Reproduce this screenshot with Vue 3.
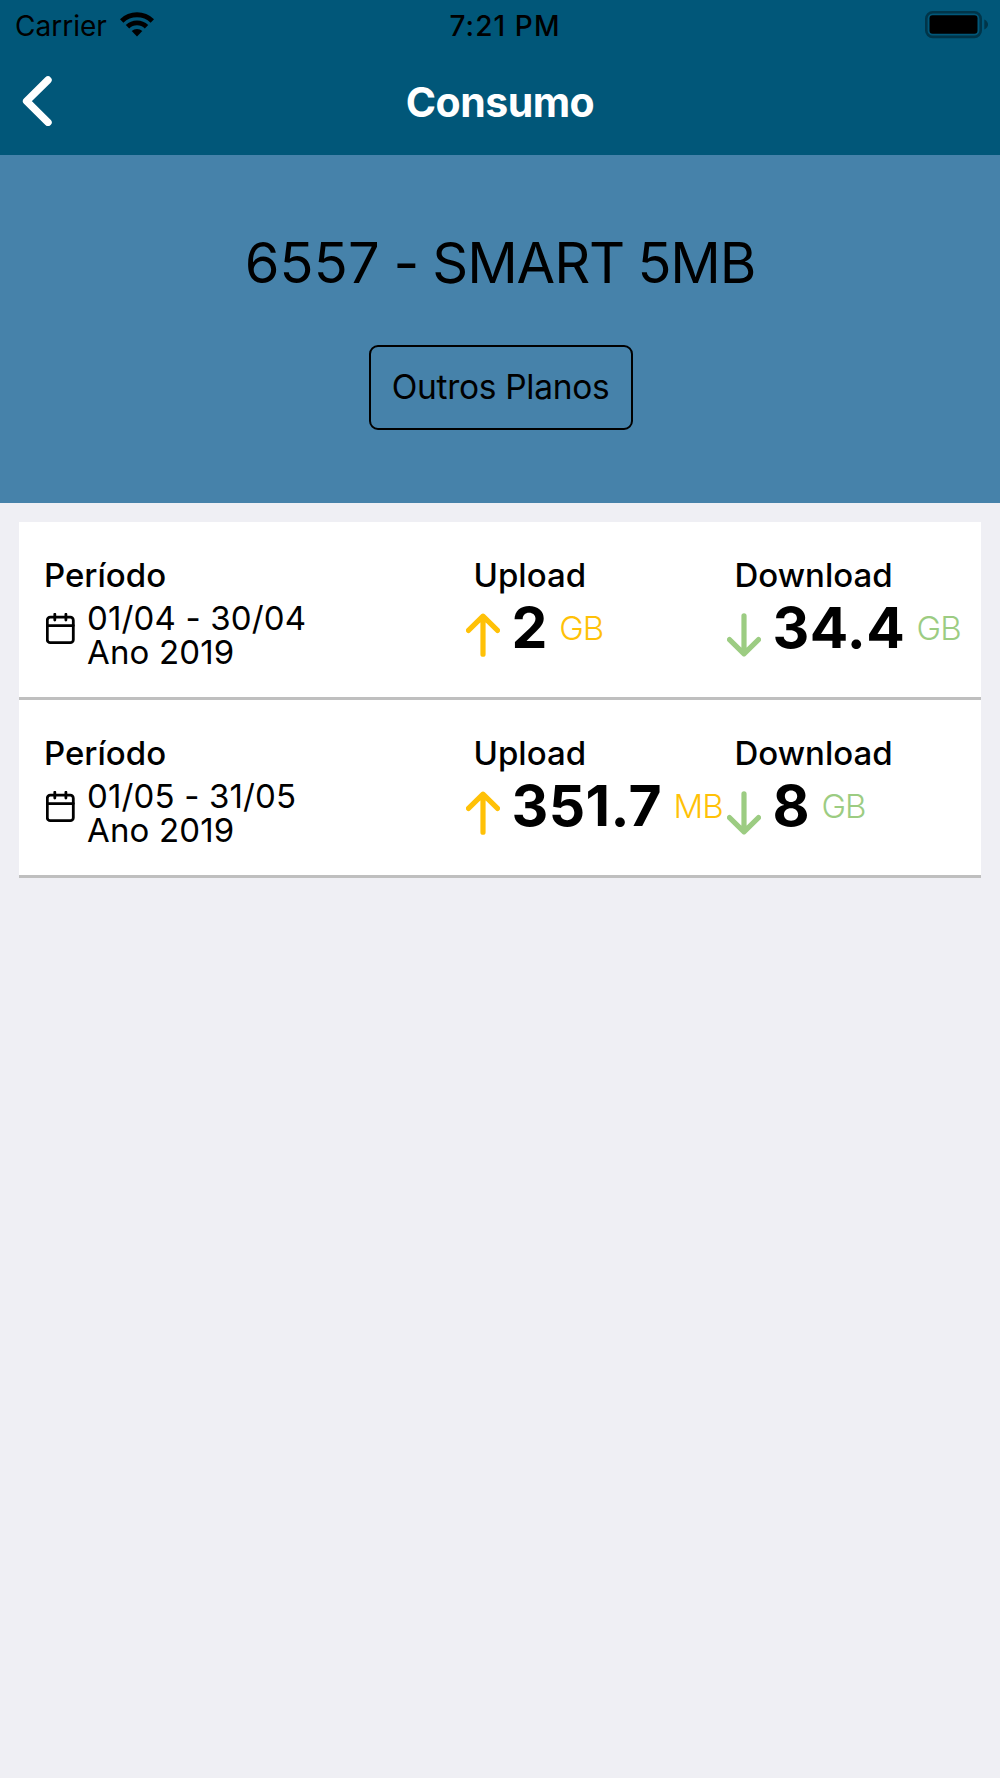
<script setup>
const plan = { code: 6557, name: 'SMART 5MB' }

const periods = [
  {
    range: '01/04 - 30/04',
    year: 2019,
    upload: { value: '2', unit: 'GB' },
    download: { value: '34.4', unit: 'GB' },
  },
  {
    range: '01/05 - 31/05',
    year: 2019,
    upload: { value: '351.7', unit: 'MB' },
    download: { value: '8', unit: 'GB' },
  },
]
</script>

<template>
  <div class="screen">
    <header class="header">
      <div class="status-bar">
        <div class="status-left">
          <span class="carrier">Carrier</span>
          <svg class="wifi" viewBox="0 0 34 25">
            <path d="M0 7.2 A24.4 24.4 0 0 1 34 7.2 L30.6 10.7 A19.5 19.5 0 0 0 3.4 10.7 Z" />
            <path d="M5.8 13 A16 16 0 0 1 28.2 13 L24.8 16.4 A11.2 11.2 0 0 0 9.2 16.4 Z" />
            <path d="M11.7 19 A7.8 7.8 0 0 1 22.3 19 L17 24.5 Z" />
          </svg>
        </div>
        <span class="clock">7:21 PM</span>
        <div class="status-right">
          <svg class="battery" viewBox="0 0 64 28">
            <rect x="1.3" y="1.3" width="54.4" height="24.6" rx="6.5" class="battery-shell" />
            <rect x="4.5" y="4.2" width="48" height="18.6" rx="3" />
            <path d="M59.3 8.5 Q63 10.5 63 13.5 Q63 16.5 59.3 18.5 Z" class="battery-cap" />
          </svg>
        </div>
      </div>
      <nav class="nav-bar">
        <button class="back" aria-label="Voltar">
          <svg viewBox="0 0 30 50">
            <path d="M26 4 L4.6 25.2 L26 46.4" />
          </svg>
        </button>
        <h1 class="title">Consumo</h1>
      </nav>
    </header>

    <section class="plan">
      <h2 class="plan-name">
        <span class="plan-code">{{ plan.code }}</span> - <span class="plan-label">{{ plan.name }}</span>
      </h2>
      <button class="plan-button">Outros Planos</button>
    </section>

    <ul class="list">
      <li v-for="period in periods" :key="period.range" class="row">
        <div class="col">
          <div class="label">Período</div>
          <div class="period">
            <svg class="calendar" viewBox="0 0 29 32">
              <rect x="1.3" y="4.2" width="26" height="25.5" rx="3" />
              <path d="M1.3 12.6 H27.3 M8.8 1.2 V7 M19.9 1.2 V7" />
            </svg>
            <div class="dates">{{ period.range }}<br />Ano {{ period.year }}</div>
          </div>
        </div>
        <div class="col">
          <div class="label label-usage">Upload</div>
          <div class="usage upload">
            <svg class="arrow" viewBox="0 0 34 44">
              <path d="M17 41.2 V3.4 M2.5 17.4 L17 3.2 L31.5 17.4" />
            </svg>
            <span class="value">{{ period.upload.value }}</span>
            <span class="unit">{{ period.upload.unit }}</span>
          </div>
        </div>
        <div class="col">
          <div class="label label-usage">Download</div>
          <div class="usage download">
            <svg class="arrow" viewBox="0 0 34 44">
              <path d="M17 2.8 V40.6 M2.5 26.6 L17 40.8 L31.5 26.6" />
            </svg>
            <span class="value">{{ period.download.value }}</span>
            <span class="unit">{{ period.download.unit }}</span>
          </div>
        </div>
      </li>
    </ul>
  </div>
</template>

<style>
body {
  margin: 0;
  background: #efeff4;
}
</style>

<style scoped>
.screen {
  width: 1000px;
  min-height: 1778px;
  background: #efeff4;
  color: #000;
  font-family: Inter, "Liberation Sans", sans-serif;
  white-space: nowrap;
}

.header {
  height: 155px;
  background: #015779;
}

.status-bar {
  display: grid;
  grid-template-columns: 1fr auto 1fr;
  height: 50px;
  padding: 0 11px 0 15px;
  box-sizing: border-box;
  font-size: 28px;
  line-height: 52px;
}

.status-left {
  display: flex;
}

.status-right {
  display: flex;
  justify-content: flex-end;
}

.wifi {
  width: 34px;
  height: 25px;
  margin: 12px 0 0 13.5px;
}

.clock {
  padding-left: 6px;
  font-weight: 500;
  letter-spacing: 1.1px;
}

.battery {
  width: 64px;
  height: 28px;
  margin-top: 10.5px;
}

.battery-shell {
  fill: none;
  stroke: #013549;
  stroke-width: 2.6;
}

.battery-cap {
  fill: #013549;
}

.nav-bar {
  display: grid;
  grid-template-columns: 100px 1fr 100px;
  height: 105px;
}

.back {
  display: flex;
  align-items: flex-start;
  padding: 26px 0 0 22px;
  border: 0;
  background: none;
}

.back svg {
  width: 30px;
  height: 50px;
  fill: none;
  stroke: #fff;
  stroke-width: 7.4;
  stroke-linecap: round;
  stroke-linejoin: round;
}

.title {
  margin: 0;
  color: #fff;
  font-size: 41px;
  font-weight: 700;
  letter-spacing: -0.5px;
  line-height: 104px;
  text-align: center;
}

.plan {
  display: flex;
  flex-direction: column;
  align-items: center;
  height: 348px;
  background: #4682aa;
}

.plan-name {
  margin: 73px 0 0;
  font-size: 56px;
  font-weight: 400;
  letter-spacing: -0.7px;
  word-spacing: -1.4px;
  line-height: 70px;
}

.plan-code {
  letter-spacing: 0.2px;
}

.plan-label {
  letter-spacing: -1.1px;
}

.plan-button {
  width: 264px;
  height: 85px;
  margin: 47px 0 0 1px;
  padding: 0 0 2px;
  border: 2px solid #000;
  border-radius: 9px;
  background: none;
  color: #000;
  font-family: inherit;
  font-size: 33.5px;
  letter-spacing: -0.3px;
}

.list {
  margin: 19px 19px 0;
  padding: 0;
  list-style: none;
}

.row {
  display: grid;
  grid-template-columns: 422px 261px 1fr;
  height: 178px;
  padding: 33px 0 0 25px;
  box-sizing: border-box;
  border-bottom: 3px solid #bfbfbf;
  background: #fff;
}

.label {
  font-size: 33px;
  font-weight: 500;
  line-height: 40px;
}

.label-usage {
  padding-left: 7.5px;
}

.period {
  display: flex;
}

.calendar {
  width: 29px;
  height: 32px;
  margin: 18px 12px 0 2px;
  fill: none;
  stroke: #000;
  stroke-width: 2.8;
  stroke-linecap: round;
}

.dates {
  padding-top: 6px;
  font-size: 33px;
  letter-spacing: 0.15px;
  line-height: 34px;
}

.usage {
  display: flex;
}

.arrow {
  flex: none;
  width: 34px;
  height: 44px;
  margin-top: 17.5px;
  fill: none;
  stroke: currentColor;
  stroke-width: 5.2;
  stroke-linecap: round;
  stroke-linejoin: round;
}

.value {
  margin-left: 11.5px;
  color: #000;
  font-size: 57px;
  font-weight: 700;
  letter-spacing: 0.4px;
  line-height: 65px;
}

.unit {
  margin-left: 11.5px;
  font-size: 33px;
  font-weight: 300;
  letter-spacing: -1px;
  line-height: 66px;
}

.upload {
  color: #ffc107;
}

.download {
  color: #9ccc82;
}
</style>
